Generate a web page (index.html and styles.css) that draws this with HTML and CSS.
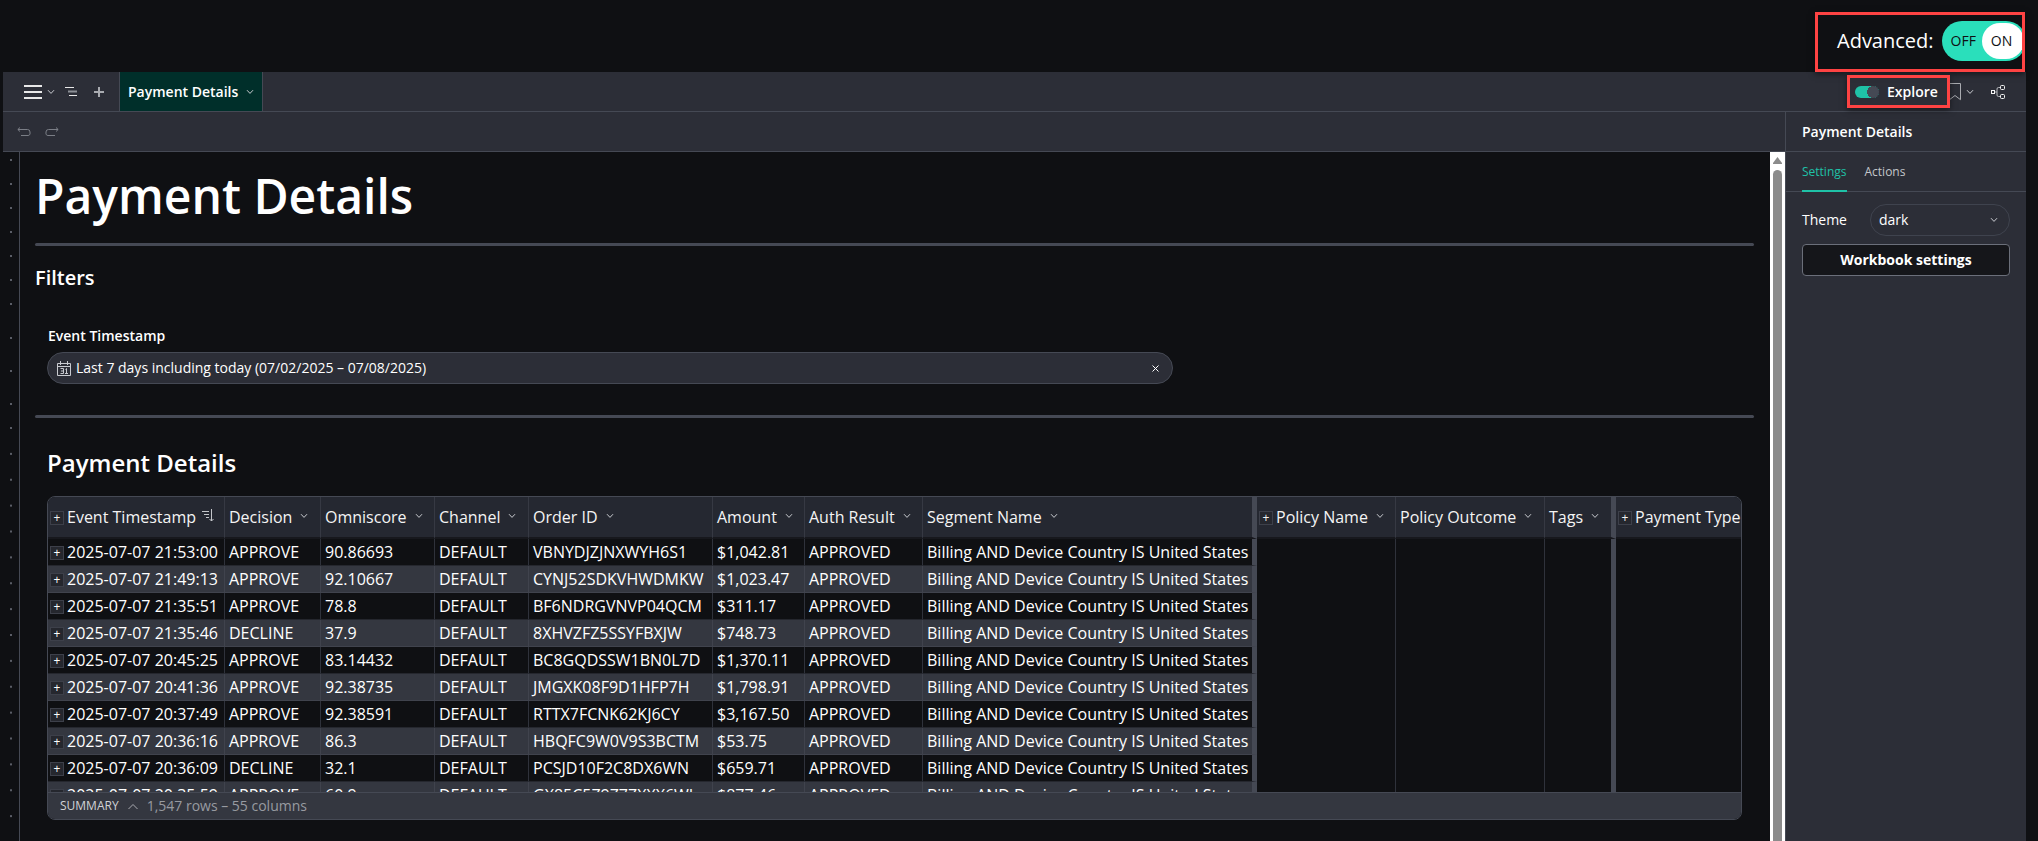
FILE: index.html
```html
<!DOCTYPE html>
<html lang="en">
<head>
<meta charset="utf-8">
<title>Payment Details</title>
<link rel="stylesheet" href="styles.css">
</head>
<body>
<svg class="defs" aria-hidden="true">
  <symbol id="chev" viewBox="0 0 8 6"><path d="M1 1.2 4 4.4 7 1.2" fill="none" stroke="currentColor"/></symbol>
</svg>

<header class="top">
  <label class="callout callout-advanced">
    <span class="advanced-text">Advanced:</span>
    <input class="sr" type="checkbox" checked>
    <span class="switch"><span class="switch-off">OFF</span><span class="switch-on">ON</span></span>
  </label>
</header>

<div class="app">
  <nav class="toolbar">
    <button class="icon menu" aria-label="Menu">
      <svg width="18" height="14" viewBox="0 0 18 14"><path d="M0 1h18M0 7h18M0 13h18" stroke="#e8e8e8" stroke-width="2"/></svg>
      <svg class="chev" width="8" height="6"><use href="#chev"/></svg>
    </button>
    <button class="icon" aria-label="Outline">
      <svg width="12" height="9" viewBox="0 0 12 9"><path d="M0 .5h9M4 8.500h8" stroke="#e8e8e8"/><path d="M3 4.500h9" stroke="#8d9097" stroke-width="2"/></svg>
    </button>
    <button class="icon plus" aria-label="Add page">
      <svg width="10" height="10" viewBox="0 0 10 10"><path d="M5 0v10M0 5h10" stroke="#a9abb0" stroke-width="2"/></svg>
    </button>
    <button class="page-tab">Payment Details <svg class="chev" width="8" height="6"><use href="#chev"/></svg></button>
    <div class="toolbar-right">
      <label class="callout callout-explore">
        <input class="sr" type="checkbox" checked>
        <span class="mini-switch"></span>
        Explore
      </label>
      <button class="icon bookmark" aria-label="Bookmarks">
        <svg width="14" height="18" viewBox="0 0 14 18"><path d="M1.500.5h11v16.200L7 12.500l-5.500 4.200z" fill="none" stroke="#a9abb0"/></svg>
        <svg class="chev" width="8" height="6"><use href="#chev"/></svg>
      </button>
      <button class="icon" aria-label="Share">
        <svg width="14" height="14" viewBox="0 0 14 14" fill="none" stroke="#f4f4f4"><path d="M4 7h2M9 2.500H7.500A1.500 1.500 0 0 0 6 4v6a1.500 1.500 0 0 0 1.500 1.500H9" stroke="#b9bbc0"/><rect x=".5" y="5.500" width="3" height="3"/><rect x="9.500" y=".5" width="4" height="4" rx="1"/><rect x="9.500" y="9.500" width="4" height="4" rx="1"/></svg>
      </button>
    </div>
  </nav>

  <div class="body">
    <section class="work">
      <div class="history">
        <button class="icon" aria-label="Undo"><svg width="14" height="10" viewBox="0 0 14 10"><path d="M3 .5.8 2.500 3 4.500M1 2.500h9.500a2.500 2.500 0 0 1 2.500 2.500v1a2 2 0 0 1-2 2.500H4" fill="none" stroke="#7b7e86"/></svg></button>
        <button class="icon" aria-label="Redo"><svg width="14" height="10" viewBox="0 0 14 10"><path d="m11 .5 2.200 2-2.200 2M13 2.500H3.500A2.500 2.500 0 0 0 1 5v1a2 2 0 0 0 2 2.500h7" fill="none" stroke="#7b7e86"/></svg></button>
      </div>
      <div class="canvas">
        <div class="rail"><i class="dots-a"></i><i class="dots-b"></i><i class="dots-c"></i></div>
        <main class="content">
          <h1>Payment Details</h1>
          <hr>
          <h2>Filters</h2>
          <div class="filter">
            <label class="filter-label" for="range">Event Timestamp</label>
            <div class="pill">
              <svg width="14" height="15" viewBox="0 0 14 15" fill="none" stroke="#c9cbd0"><path d="M.5 2.500h13v12H.5zM.5 5.500h13M3.500 0v4M10.500 0v4M3.500 7.500h3v5h-3M4 10h2.500M8.500 8.500l1-1v5M8 12.500h3"/></svg>
              <input id="range" type="text" readonly value="Last 7 days including today (07/02/2025 – 07/08/2025)">
              <button class="icon" aria-label="Clear"><svg width="7" height="7" viewBox="0 0 7 7"><path d="m.5.5 6 6M6.500.5l-6 6" stroke="#fff"/></svg></button>
            </div>
          </div>
          <hr>
          <h3>Payment Details</h3>
          <div class="grid">
            <div class="grid-view">
              <table>
                <colgroup><col class="w1"><col class="w2"><col class="w3"><col class="w4"><col class="w5"><col class="w6"><col class="w7"><col class="w8"><col class="w9"><col class="w10"><col class="w11"><col></colgroup>
                <thead>
                  <tr>
                    <th class="lead"><button class="exp">+</button>Event Timestamp<svg class="sort" width="12" height="13" viewBox="0 0 12 13" fill="none" stroke="#c4c6ca"><path d="M0 2.500h7M2 5.500h5M4 8.500h3M9.500 0v12M7.500 10l2 2 2-2"/></svg></th>
                    <th>Decision<svg class="chev" width="8" height="6"><use href="#chev"/></svg></th>
                    <th>Omniscore<svg class="chev" width="8" height="6"><use href="#chev"/></svg></th>
                    <th>Channel<svg class="chev" width="8" height="6"><use href="#chev"/></svg></th>
                    <th>Order ID<svg class="chev" width="8" height="6"><use href="#chev"/></svg></th>
                    <th>Amount<svg class="chev" width="8" height="6"><use href="#chev"/></svg></th>
                    <th>Auth Result<svg class="chev" width="8" height="6"><use href="#chev"/></svg></th>
                    <th class="edge">Segment Name<svg class="chev" width="8" height="6"><use href="#chev"/></svg></th>
                    <th class="lead"><button class="exp">+</button>Policy Name<svg class="chev" width="8" height="6"><use href="#chev"/></svg></th>
                    <th>Policy Outcome<svg class="chev" width="8" height="6"><use href="#chev"/></svg></th>
                    <th class="edge">Tags<svg class="chev" width="8" height="6"><use href="#chev"/></svg></th>
                    <th class="lead last"><button class="exp">+</button>Payment Type</th>
                  </tr>
                </thead>
                <tbody>
                  <tr><td class="lead"><button class="exp">+</button>2025-07-07 21:53:00</td><td>APPROVE</td><td>90.86693</td><td>DEFAULT</td><td>VBNYDJZJNXWYH6S1</td><td>$1,042.81</td><td>APPROVED</td><td class="edge">Billing AND Device Country IS United States</td><td class="void" rowspan="10"></td><td class="void" rowspan="10"></td><td class="void edge" rowspan="10"></td><td class="void last" rowspan="10"></td></tr>
                  <tr><td class="lead"><button class="exp">+</button>2025-07-07 21:49:13</td><td>APPROVE</td><td>92.10667</td><td>DEFAULT</td><td>CYNJ52SDKVHWDMKW</td><td>$1,023.47</td><td>APPROVED</td><td class="edge">Billing AND Device Country IS United States</td></tr>
                  <tr><td class="lead"><button class="exp">+</button>2025-07-07 21:35:51</td><td>APPROVE</td><td>78.8</td><td>DEFAULT</td><td>BF6NDRGVNVP04QCM</td><td>$311.17</td><td>APPROVED</td><td class="edge">Billing AND Device Country IS United States</td></tr>
                  <tr><td class="lead"><button class="exp">+</button>2025-07-07 21:35:46</td><td>DECLINE</td><td>37.9</td><td>DEFAULT</td><td>8XHVZFZ5SSYFBXJW</td><td>$748.73</td><td>APPROVED</td><td class="edge">Billing AND Device Country IS United States</td></tr>
                  <tr><td class="lead"><button class="exp">+</button>2025-07-07 20:45:25</td><td>APPROVE</td><td>83.14432</td><td>DEFAULT</td><td>BC8GQDSSW1BN0L7D</td><td>$1,370.11</td><td>APPROVED</td><td class="edge">Billing AND Device Country IS United States</td></tr>
                  <tr><td class="lead"><button class="exp">+</button>2025-07-07 20:41:36</td><td>APPROVE</td><td>92.38735</td><td>DEFAULT</td><td>JMGXK08F9D1HFP7H</td><td>$1,798.91</td><td>APPROVED</td><td class="edge">Billing AND Device Country IS United States</td></tr>
                  <tr><td class="lead"><button class="exp">+</button>2025-07-07 20:37:49</td><td>APPROVE</td><td>92.38591</td><td>DEFAULT</td><td>RTTX7FCNK62KJ6CY</td><td>$3,167.50</td><td>APPROVED</td><td class="edge">Billing AND Device Country IS United States</td></tr>
                  <tr><td class="lead"><button class="exp">+</button>2025-07-07 20:36:16</td><td>APPROVE</td><td>86.3</td><td>DEFAULT</td><td>HBQFC9W0V9S3BCTM</td><td>$53.75</td><td>APPROVED</td><td class="edge">Billing AND Device Country IS United States</td></tr>
                  <tr><td class="lead"><button class="exp">+</button>2025-07-07 20:36:09</td><td>DECLINE</td><td>32.1</td><td>DEFAULT</td><td>PCSJD10F2C8DX6WN</td><td>$659.71</td><td>APPROVED</td><td class="edge">Billing AND Device Country IS United States</td></tr>
                  <tr><td class="lead"><button class="exp">+</button>2025-07-07 20:35:59</td><td>APPROVE</td><td>60.9</td><td>DEFAULT</td><td>GX85C5Z9Z7ZXXX6WL</td><td>$877.46</td><td>APPROVED</td><td class="edge">Billing AND Device Country IS United States</td></tr>
                </tbody>
              </table>
            </div>
            <footer class="summary">
              <button class="summary-toggle">SUMMARY <svg width="10" height="7" viewBox="0 0 10 7"><path d="M.5 6 5 1.500 9.500 6" fill="none" stroke="#a9abb0"/></svg></button>
              <span>1,547 rows – 55 columns</span>
            </footer>
          </div>
        </main>
        <div class="scrollbar">
          <svg width="9" height="7" viewBox="0 0 9 7"><path d="M4.500 0 9 6v1H0V6z" fill="#8b8b8b"/></svg>
          <i class="thumb"></i>
        </div>
      </div>
    </section>

    <aside class="panel">
      <h4>Payment Details</h4>
      <div class="tabs" role="tablist">
        <button class="tab active" role="tab">Settings</button>
        <button class="tab" role="tab">Actions</button>
      </div>
      <div class="settings">
        <div class="field">
          <label for="theme">Theme</label>
          <div class="select">
            <select id="theme"><option>dark</option><option>light</option></select>
            <svg class="chev" width="8" height="6"><use href="#chev"/></svg>
          </div>
        </div>
        <button class="wb">Workbook settings</button>
      </div>
    </aside>
  </div>
</div>
</body>
</html>
```
FILE: styles.css
```css
:root {
  --bg: #0f1013;
  --bar: #2c2e37;
  --line: #454954;
  --stripe: #343740;
  --teal: #1fc2a7;
  --red: #fe4343;
}
* { box-sizing: border-box; }
body {
  margin: 0;
  min-height: 100vh;
  display: flex;
  flex-direction: column;
  background: var(--bg);
  color: #fff;
  font: 14px/20px "Open Sans", "Noto Sans", sans-serif;
}
button, input, select { font: inherit; color: inherit; background: none; border: 0; padding: 0; margin: 0; outline: 0; }
svg { display: block; flex: none; }
.defs { position: absolute; width: 0; height: 0; }
.sr { appearance: none; position: absolute; width: 0; height: 0; }
.icon { display: flex; align-items: center; }
.chev { color: #c9cbd0; }

.top { height: 72px; display: flex; justify-content: flex-end; align-items: flex-end; padding-right: 13px; }
.callout { display: flex; align-items: center; border: 3px solid var(--red); box-shadow: 0 2px 6px rgba(0, 0, 0, .5); z-index: 1; }
.callout-advanced { width: 210px; height: 60px; padding: 0 0 2px 19px; gap: 8px; overflow: hidden; }
.advanced-text { font-size: 20px; line-height: 28px; }
.switch { flex: none; display: flex; align-items: center; justify-content: space-between; width: 84px; height: 40px; padding: 2px; border-radius: 20px; background: #2adfbb; color: #0f1013; }
.switch-off { padding-left: 7px; }
.switch-on { width: 42px; height: 36px; border-radius: 18px; background: #fff; text-align: center; line-height: 36px; padding-right: 2px; }

.app { flex: 1; display: flex; flex-direction: column; margin: 0 12px 0 3px; }
.toolbar { height: 40px; display: flex; align-items: center; background: var(--bar); border-bottom: 1px solid var(--line); padding: 0 21px; }
.menu { gap: 5px; margin-right: 10px; }
.plus { margin: 0 15px 0 17px; }
.page-tab { display: flex; align-items: center; gap: 8px; height: 39px; padding: 0 8px; font-weight: 600; background: #002f2a; border: solid var(--line); border-width: 0 1px; }
.toolbar-right { margin-left: auto; display: flex; align-items: center; gap: 17px; }
.callout-explore { width: 103px; height: 33px; padding-left: 5px; gap: 8px; font-weight: 600; margin-right: -19px; }
.mini-switch { width: 24px; height: 12px; border-radius: 6px; background: radial-gradient(circle at 18px 6px, #454954 6px, var(--teal) 6px); }
.bookmark { gap: 4px; }

.body { flex: 1; display: flex; }
.work { flex: 1; min-width: 0; display: flex; flex-direction: column; }
.history { height: 40px; display: flex; align-items: center; gap: 14px; padding: 0 14px; background: var(--bar); border-bottom: 1px solid var(--line); }
.canvas { flex: 1; display: flex; }
.rail { width: 17px; padding: 7px 0 0 7px; display: flex; flex-direction: column; border-right: 1px solid var(--line); }
.rail i { width: 2px; background: linear-gradient(#5b5e67 2px, transparent 2px) 0 0 / 2px 24px repeat-y; }
.rail .dots-a { height: 168px; margin-bottom: 10px; }
.rail .dots-b { height: 90px; background-size: 2px 33px; }
.rail .dots-c { flex: 1; background-size: 2px 26px; background-repeat: round; }
.content { flex: 1; min-width: 0; padding: 11px 16px 20px 15px; }
h1, h2, h3, h4 { margin: 0; font-weight: 600; }
h1 { font-size: 48px; line-height: 66px; }
hr { height: 3px; margin: 0; border: 0; border-radius: 2px; background: var(--line); }
h1 + hr { margin-top: 14px; }
h2 { font-size: 20px; line-height: 28px; margin: 18px 0 0; }
.filter { padding: 34px 12px 31px; width: 1150px; max-width: 100%; }
.filter-label { display: block; margin: 0 0 6px 1px; font-weight: 600; }
.pill { height: 32px; display: flex; align-items: center; padding: 0 13px 0 9px; border: 1px solid var(--line); border-radius: 16px; background: var(--bar); }
.pill input { flex: 1; margin-left: 5px; }
h3 { font-size: 24px; line-height: 32px; margin: 29px 0 17px 12px; }

.grid { margin: 0 12px; border: 1px solid var(--line); border-radius: 8px; overflow: hidden; }
.grid-view { height: 295px; overflow: hidden; }
table { width: 100%; table-layout: fixed; border-collapse: separate; border-spacing: 0; font-size: 16px; line-height: 22px; }
.w1 { width: 177px; } .w2 { width: 96px; } .w3 { width: 114px; } .w4 { width: 94px; }
.w5 { width: 184px; } .w6 { width: 92px; } .w7 { width: 118px; } .w8 { width: 334px; }
.w9 { width: 139px; } .w10 { width: 149px; } .w11 { width: 71px; }
th, td { padding: 0 0 0 4px; text-align: left; font-weight: 400; white-space: nowrap; overflow: hidden; border-right: 1px solid #2f323b; }
th { height: 42px; background: #252831; border-bottom: 2px solid #17181d; color: #f4f4f4; border-right-color: #363943; }
td { height: 27px; border-bottom: 1px solid #25272e; }
tr:nth-child(even) td { background: var(--stripe); border-bottom-color: #40434d; border-right-color: #40434d; }
th.edge, td.edge, tr:nth-child(even) td.edge { border-right: 5px solid var(--line); }
th.last, td.last { border-right: 0; }
.lead { padding-left: 2px; }
.exp { display: inline-block; width: 14px; height: 14px; margin-right: 3px; border: 1px solid #3d404a; background: #25272e; font-size: 12px; line-height: 11px; vertical-align: 1px; text-align: center; }
th .chev, th .sort { display: inline-block; margin-left: 8px; vertical-align: 4px; }
th .sort { margin-left: 6px; vertical-align: 1px; }
.summary { height: 27px; display: flex; align-items: center; gap: 9px; padding: 0 12px; background: var(--stripe); border-top: 1px solid var(--line); color: #989ba1; }
.summary-toggle { display: flex; align-items: center; gap: 9px; font-size: 12px; color: #d0d2d5; }

.scrollbar { width: 15px; display: flex; flex-direction: column; align-items: center; gap: 6px; padding-top: 5px; background: #fff; }
.thumb { flex: 1; width: 9px; border-radius: 5px 5px 0 0; background: #8b8b8b; }

.panel { width: 241px; background: var(--bar); border-left: 1px solid var(--line); }
.panel h4 { height: 40px; padding: 0 16px; line-height: 40px; border-bottom: 1px solid var(--line); }
.tabs { display: flex; gap: 18px; height: 40px; padding: 0 16px; border-bottom: 1px solid var(--line); }
.tab { height: 40px; padding-top: 2px; font-size: 12px; color: #c4c6ca; border-bottom: 2px solid transparent; }
.tab.active { color: var(--teal); border-color: var(--teal); }
.settings { padding: 12px 16px; display: flex; flex-direction: column; gap: 8px; }
.field { display: flex; align-items: center; justify-content: space-between; }
.select { position: relative; width: 140px; }
.select select { appearance: none; width: 100%; height: 32px; padding: 0 8px; border: 1px solid #3f434e; border-radius: 16px; }
.select .chev { position: absolute; right: 12px; top: 13px; }
.wb { height: 32px; border: 1px solid #6b6f7a; border-radius: 4px; background: #15161a; font-weight: 700; }
```
